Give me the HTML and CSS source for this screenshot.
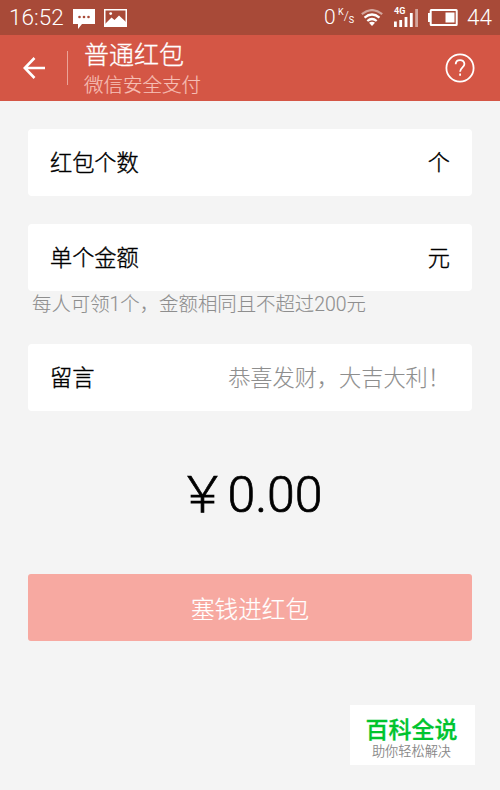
FILE: index.html
```
<!DOCTYPE html>
<html lang="zh-CN">

<head>
	<meta charset="UTF-8">
	<title>普通红包</title>
	<link rel="stylesheet" href="styles.css">
</head>

<body>
	<div class="status-bar">
		<span class="time">16:52</span>
		<svg class="icon-chat" width="22" height="20" viewBox="0 0 22 20">
			<path fill="#fff" d="M0 0h22v15H9l-4 5v-5H0z" />
			<circle cx="6.5" cy="8" r="1.3" fill="#a84a38" />
			<circle cx="11" cy="8" r="1.3" fill="#a84a38" />
			<circle cx="15.5" cy="8" r="1.3" fill="#a84a38" />
		</svg>
		<svg class="icon-image" width="23" height="18" viewBox="0 0 23 18">
			<rect x="0.75" y="0.75" width="21.5" height="16.5" fill="none" stroke="#fff" stroke-width="1.5" />
			<circle cx="6.7" cy="4.6" r="1.4" fill="#fff" />
			<path fill="#fff" d="M1 15l6.500-6.500 3 2.500L15 6.500l7 6.500v4H1z" />
		</svg>
		<span class="speed">0</span>
		<span class="unit"><span class="unit-k">K</span><span class="unit-slash">/</span><span class="unit-s">S</span></span>
		<svg class="icon-wifi" width="22" height="17" viewBox="0 0 22 17" fill="none" stroke="#fff" stroke-width="2.200">
			<path d="M0.800 5.200Q11-3 21.200 5.200" opacity="0.5" />
			<path d="M3.500 8.600Q11 2.400 18.500 8.600" />
			<path d="M6.300 12Q11 8 15.700 12" />
			<path d="M8 13.800Q11 11.800 14 13.800L11 17z" fill="#fff" stroke="none" />
		</svg>
		<span class="signal">
			<span class="network">4G</span>
			<svg width="24" height="18" viewBox="0 0 24 18" fill="#fff">
				<path d="M0 12.500h2.800V18H0zM5.300 11h2.800v7H5.300zM10.600 8h2.800v10h-2.800zM15.900 4h2.800v14h-2.800z" />
				<path d="M21.200 0H24v18h-2.800z" opacity="0.5" />
			</svg>
		</span>
		<svg class="icon-battery" width="30" height="17" viewBox="0 0 30 17">
			<path fill="#fff" d="M0 4h2.500v9H0z" />
			<rect x="2.700" y="1" width="26" height="15" rx="0.500" fill="none" stroke="#fff" stroke-width="2" />
			<path fill="#fff" d="M17.500 3.500h9v10h-9z" />
		</svg>
		<span class="level">44</span>
	</div>

	<header class="header">
		<svg class="back" width="22" height="22" viewBox="0 0 22 22" fill="none" stroke="#fff" stroke-width="2.600">
			<path d="M11.500 1L1.800 11l9.700 10M1.800 11H22" />
		</svg>
		<div class="divider"></div>
		<div class="titles">
			<h1 class="title">普通红包</h1>
			<p class="subtitle">微信安全支付</p>
		</div>
		<svg class="help" width="30" height="30" viewBox="0 0 30 30" fill="none" stroke="#fff" stroke-width="1.800">
			<circle cx="15" cy="15" r="13.600" />
			<path d="M10.700 11.300C10.700 5.700 19.400 5.700 19.400 11.100C19.400 14.300 15.100 14.500 15.100 18.800" />
			<path d="M15.100 20.500v2.200" />
		</svg>
	</header>

	<main class="content">
		<div class="field">
			<span>红包个数</span>
			<span>个</span>
		</div>
		<div class="field">
			<span>单个金额</span>
			<span>元</span>
		</div>
		<p class="note">每人可领1个，金额相同且不超过200元</p>
		<div class="field">
			<span>留言</span>
			<span class="placeholder">恭喜发财，大吉大利！</span>
		</div>
		<div class="amount">￥0.00</div>
		<button class="submit" type="button">塞钱进红包</button>
	</main>

	<div class="brand">
		<div class="brand-name">百科全说</div>
		<div class="brand-text">助你轻松解决</div>
	</div>
</body>

</html>
```
FILE: styles.css
```
* {
	box-sizing: border-box;
}

body {
	margin: 0;
	height: 790px;
	overflow: hidden;
	background-color: #f4f4f4;
	color: #111;
	font-family: Roboto, "Noto Sans CJK SC", sans-serif;
	font-weight: 300;
}

h1,
p {
	margin: 0;
	font-weight: 300;
}

svg {
	display: block;
	flex: none;
}

.status-bar {
	display: flex;
	align-items: center;
	height: 35px;
	padding-left: 9px;
	background-color: #a84a38;
	color: #fff;
	font-size: 22.5px;
	line-height: 37px;
}

.status-bar span {
	flex: none;
}

.time {
	width: 65px;
}

.icon-chat {
	margin-top: 2px;
	margin-left: -1px;
}

.icon-image {
	margin-left: 9px;
}

.speed {
	width: 13px;
	margin-left: 197px;
	font-size: 21px;
}

.unit {
	display: flex;
	width: 15px;
	margin-left: 1px;
	font-size: 9px;
	font-weight: 400;
	line-height: 10px;
}

.unit-k {
	margin-top: -4px;
}

.unit-slash {
	font-size: 13px;
	font-weight: 300;
}

.unit-s {
	margin-top: 4px;
}

.icon-wifi {
	margin-left: 8px;
}

.signal {
	position: relative;
	margin-left: 11px;
}

.network {
	position: absolute;
	top: -2px;
	left: 0;
	font-size: 9px;
	font-weight: 700;
	line-height: 9px;
}

.icon-battery {
	margin-left: 10px;
}

.level {
	margin-left: 9px;
}

.header {
	display: flex;
	align-items: center;
	height: 66px;
	padding: 0 25px 0 23px;
	background-color: #d45645;
	color: #fff;
}

.divider {
	width: 1px;
	height: 34px;
	margin: 0 16px 0 22px;
	background-color: #eba397;
}

.titles {
	flex: 1;
	padding-top: 4px;
}

.title {
	font-size: 25px;
	line-height: 32px;
	-webkit-text-stroke: 0.3px;
}

.subtitle {
	color: #f6bfb5;
	font-size: 19.5px;
	line-height: 28px;
	-webkit-text-stroke: 0.2px;
}

.content {
	padding: 28px 28px 0;
}

.field {
	display: flex;
	align-items: center;
	justify-content: space-between;
	height: 67px;
	margin-bottom: 28px;
	padding: 0 22px 4px;
	border-radius: 4px;
	background-color: #fff;
	color: #000;
	font-size: 22.2px;
	-webkit-text-stroke: 0.4px;
}

.note {
	height: 53px;
	margin-top: -28px;
	padding-left: 4px;
	color: #8e8e8e;
	font-size: 19.4px;
	line-height: 28px;
	white-space: nowrap;
	-webkit-text-stroke: 0.1px;
}

.placeholder {
	color: #8e8e8e;
	-webkit-text-stroke: 0.1px;
}

.amount {
	height: 60px;
	margin-top: 54px;
	color: #000;
	font-size: 50px;
	line-height: 60px;
	text-align: center;
	-webkit-text-stroke: 0.7px;
}

.submit {
	display: block;
	width: 100%;
	height: 67px;
	margin-top: 49px;
	padding: 0;
	border: none;
	border-radius: 3px;
	background-color: #f7a9a1;
	color: #fff;
	font-family: inherit;
	font-size: 23.6px;
	font-weight: 300;
	-webkit-text-stroke: 0.2px;
}

.brand {
	width: 125px;
	height: 60px;
	margin: 64px 25px 0 auto;
	padding: 10px 2px 0 0;
	background-color: #fff;
	text-align: center;
}

.brand-name {
	color: #00c42e;
	font-size: 23px;
	font-weight: 500;
	line-height: 31px;
	-webkit-text-stroke: 0.3px;
}

.brand-text {
	color: #888;
	font-size: 13.2px;
	font-weight: 350;
	line-height: 12px;
}
```
